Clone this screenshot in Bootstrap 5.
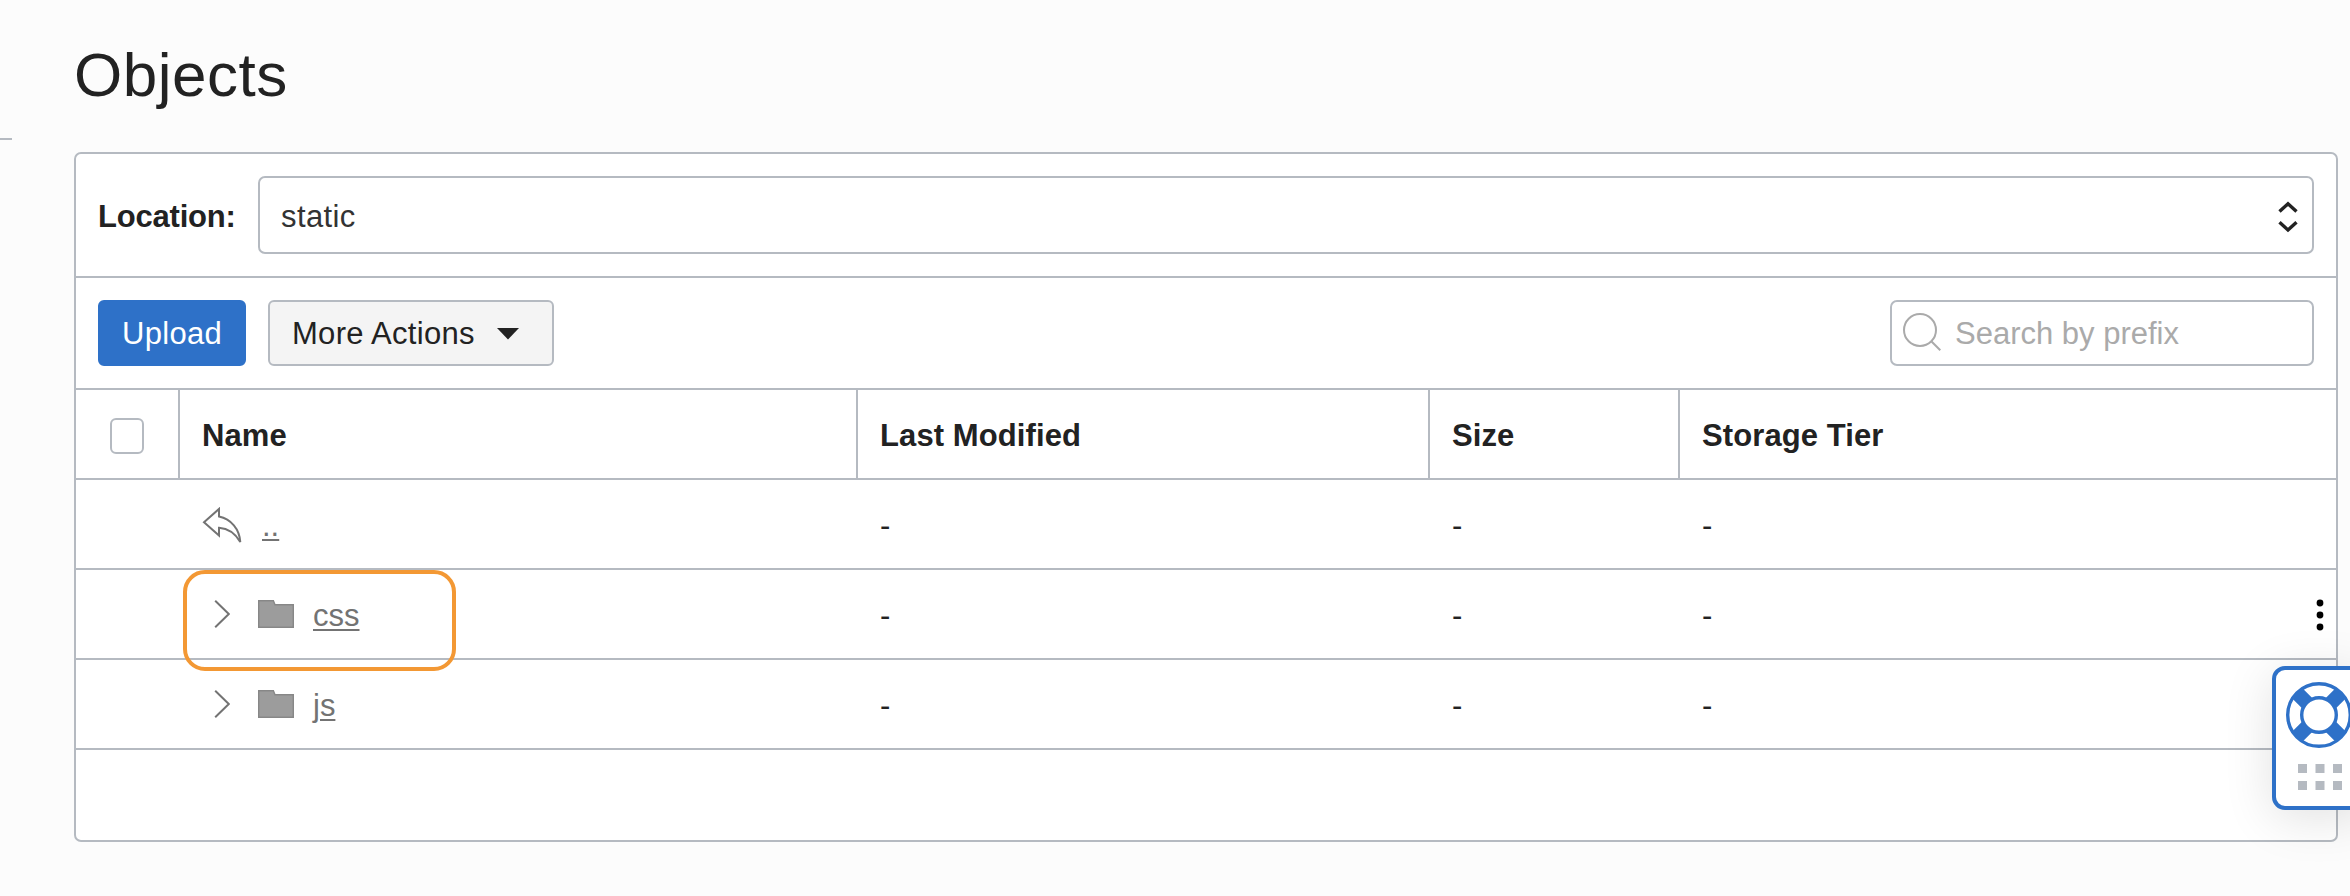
<!DOCTYPE html>
<html lang="en">
<head>
<meta charset="utf-8">
<title>Objects</title>
<link href="https://cdn.jsdelivr.net/npm/bootstrap@5.3.0/dist/css/bootstrap.min.css" rel="stylesheet">
<style>
  :root { --line: #b5bac1; --ink: #222; --muted: #737373; --brand: #2e71c8; }
  body { background: #fcfcfc; color: var(--ink); font: 31px/36px "Liberation Sans", Arial, sans-serif; height: 896px; }
  .page-main { padding: 36px 12px 0 74px; }
  .page-title { font-size: 62px; line-height: 77px; letter-spacing: .5px; height: 116px; font-weight: 400; }
  .nav-rule { top: 138px; left: 0; width: 12px; height: 2px; background: var(--line); }
  .panel { border: 2px solid var(--line); border-radius: 7px; background: #fff; height: 690px; }
  .location-bar { height: 124px; padding: 0 22px; border-bottom: 2px solid var(--line); }
  .location-label { width: 160px; letter-spacing: -.2px; }
  .location-select { height: 78px; border: 2px solid var(--line); border-radius: 7px; padding: 0 14px 0 21px; color: #333; letter-spacing: .4px; }
  .toolbar { height: 112px; padding: 0 22px; gap: 22px; border-bottom: 2px solid var(--line); }
  .toolbar .btn { height: 66px; font-size: 31px; line-height: 36px; border-radius: 6px; padding: 2px 22px 0; border-width: 2px; letter-spacing: .3px; }
  .btn-upload { background: var(--brand); border-color: var(--brand); color: #fff; width: 148px; }
  .btn-more { background: #f4f4f4; border-color: var(--line); color: var(--ink); width: 286px; }
  .caret-icon { margin: 0 11px 0 auto; }
  .search-box { width: 424px; height: 66px; border: 2px solid var(--line); border-radius: 7px; color: #aaa; padding-left: 10px; gap: 13px; }
  .search-box span { padding-top: 2px; }
  .objects { table-layout: fixed; border-collapse: separate; border-spacing: 0; width: 2260px; margin: 0; color: var(--ink); --bs-table-bg: transparent; }
  .objects > :not(caption) > * > * { height: 90px; padding: 3px 22px 0; border: 0; border-bottom: 2px solid var(--line); vertical-align: middle; color: inherit; box-shadow: none; }
  .objects > thead > tr > th:not(:last-child) { border-right: 2px solid var(--line); }
  .objects th { letter-spacing: .1px; }
  .col-pick { width: 104px; }
  .col-name { width: 678px; }
  .col-date { width: 572px; }
  .col-size { width: 250px; }
  .col-tier { width: 656px; }
  .check { width: 34px; height: 36px; border: 2px solid var(--line); border-radius: 6px; margin: 1px auto 0; }
  .objects a { color: var(--muted); text-decoration-thickness: 2px; text-underline-offset: 3px; }
  .objects svg, .search-box svg { flex: none; }
  .entry { padding-left: 12px; }
  .entry svg { margin-bottom: 4px; }
  .entry .folder { margin-left: 28px; margin-right: 19px; }
  .marker { left: 3px; top: 0; width: 273px; height: 101px; border: 4px solid #f39834; border-radius: 22px; z-index: 2; }
  .kebab { right: 9px; top: 28px; }
  .help { left: 2272px; top: 666px; width: 94px; height: 144px; border: 4px solid var(--brand); border-radius: 13px; background: #fff; box-shadow: 0 8px 50px rgba(0,0,0,.12); z-index: 3; }
</style>
</head>
<body class="position-relative overflow-hidden">
<svg width="0" height="0" class="position-absolute" aria-hidden="true">
  <symbol id="chevron" viewBox="0 0 16 28"><path d="M1.200 .8 14.800 14 1.200 27.200" fill="none" stroke="#737373" stroke-width="2"/></symbol>
  <symbol id="folder" viewBox="0 0 36 28"><path d="M.7 .7H15.400L17 4.700H35.300V27.300H.7Z" fill="#9c9c9c" stroke="#878787" stroke-width="1.400"/></symbol>
</svg>
<div class="nav-rule position-absolute"></div>
<main class="page-main">
  <h1 class="page-title m-0">Objects</h1>
  <section class="panel">
    <div class="location-bar d-flex align-items-center">
      <label class="location-label fw-bold pt-1">Location:</label>
      <div class="location-select flex-grow-1 d-flex align-items-center justify-content-between">
        <span class="pt-1">static</span>
        <svg class="mt-1" width="20" height="32" viewBox="0 0 20 32" fill="none" stroke="#222" stroke-width="3.400"><path d="M1.500 10.500 10 2.800 18.500 10.500M1.500 21.300 10 29 18.500 21.300"/></svg>
      </div>
    </div>
    <div class="toolbar d-flex align-items-center">
      <button class="btn btn-upload d-flex align-items-center">Upload</button>
      <button class="btn btn-more d-flex align-items-center">More Actions
        <svg class="caret-icon" width="22" height="12" viewBox="0 0 22 12"><path d="M0 0H22L11 11.500Z" fill="#222"/></svg>
      </button>
      <div class="search-box ms-auto d-flex align-items-center">
        <svg width="40" height="40" viewBox="0 0 40 40" fill="none" stroke="#aaa" stroke-width="2"><circle cx="18" cy="17" r="16"/><path d="M29.300 28.300 38.300 37.300"/></svg>
        <span>Search by prefix</span>
      </div>
    </div>
    <table class="table objects">
      <colgroup><col class="col-pick"><col class="col-name"><col class="col-date"><col class="col-size"><col class="col-tier"></colgroup>
      <thead>
        <tr>
          <th><span class="check d-block"></span></th>
          <th>Name</th><th>Last Modified</th><th>Size</th><th>Storage Tier</th>
        </tr>
      </thead>
      <tbody>
        <tr>
          <td></td>
          <td><div class="d-flex align-items-center">
            <svg width="40" height="38" viewBox="0 0 40 38" fill="none" stroke="#737373" stroke-width="2"><path d="M2 15.200 17 1.900V9.500C29 12 37.500 22 38.300 35 33 26 27 21.500 17 20.800V28.600Z"/></svg>
            <a href="#" class="ms-3 ps-1">..</a>
          </div></td>
          <td>-</td><td>-</td><td>-</td>
        </tr>
        <tr>
          <td></td>
          <td class="position-relative"><div class="marker position-absolute"></div>
            <div class="entry d-flex align-items-center">
              <svg width="16" height="28"><use href="#chevron"/></svg>
              <svg class="folder" width="36" height="28"><use href="#folder"/></svg>
              <a href="#">css</a>
            </div></td>
          <td>-</td><td>-</td>
          <td class="position-relative">-
            <svg class="kebab position-absolute" width="14" height="34" viewBox="0 0 14 34"><circle cx="7" cy="5" r="3.400"/><circle cx="7" cy="17" r="3.400"/><circle cx="7" cy="29" r="3.400"/></svg>
          </td>
        </tr>
        <tr>
          <td></td>
          <td><div class="entry d-flex align-items-center">
              <svg width="16" height="28"><use href="#chevron"/></svg>
              <svg class="folder" width="36" height="28"><use href="#folder"/></svg>
              <a href="#">js</a>
            </div></td>
          <td>-</td><td>-</td><td>-</td>
        </tr>
      </tbody>
    </table>
  </section>
</main>
<aside class="help position-absolute">
  <svg width="86" height="136" viewBox="0 0 86 136">
    <g fill="none" stroke="#2e71c8">
      <circle cx="43" cy="45" r="31.300" stroke-width="3.400" fill="#fff"/>
      <path d="M21.100 23.100 64.900 66.900M64.900 23.100 21.100 66.900" stroke-width="14.400"/>
      <circle cx="43" cy="45" r="17.300" stroke-width="3.400" fill="#fff"/>
    </g>
    <path fill="#b5bac1" d="M22 94h9v9h-9zM39.500 94h9v9h-9zM57 94h9v9h-9zM22 111h9v9h-9zM39.500 111h9v9h-9zM57 111h9v9h-9z"/>
  </svg>
</aside>
<script src="https://cdn.jsdelivr.net/npm/bootstrap@5.3.0/dist/js/bootstrap.bundle.min.js"></script>
</body>
</html>
